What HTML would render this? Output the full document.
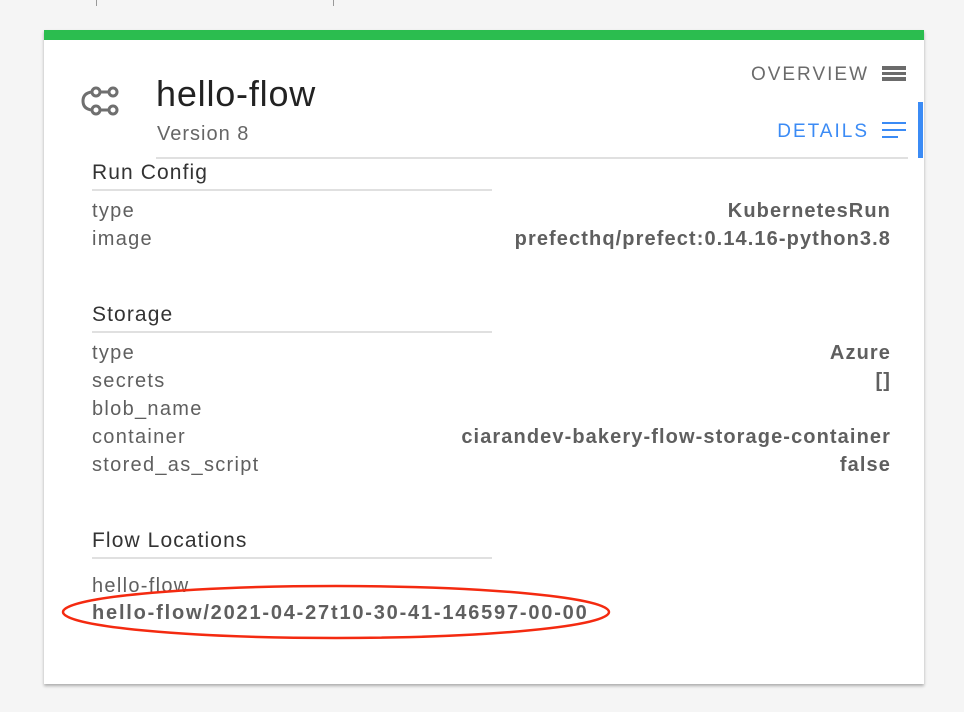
<!DOCTYPE html>
<html><head><style>
*{margin:0;padding:0;box-sizing:border-box}
body{width:964px;height:712px;background:#f5f5f5;position:relative;overflow:hidden;font-family:"Liberation Sans",Roboto,sans-serif}
.card{position:absolute;left:44px;top:30px;width:880px;height:654px;background:#fff;box-shadow:0 2px 3px rgba(0,0,0,.3)}
.green{position:absolute;left:44px;top:30px;width:880px;height:10px;background:#2bbd4f}
.t{position:absolute;white-space:nowrap}
.lbl{color:#5f5f5f;font-size:20px;left:92px;letter-spacing:1.3px}
.val{color:#5f5f5f;font-size:20px;font-weight:bold;right:73px;letter-spacing:1.1px}
.h{color:#333;font-size:21px;left:92px;letter-spacing:1.1px}
.line{position:absolute;height:2px;background:#e0e0e0}
</style></head><body>
<div style="position:absolute;left:96px;top:0;width:1px;height:6px;background:#999"></div>
<div style="position:absolute;left:333px;top:0;width:1px;height:6px;background:#999"></div>
<div class="card"></div>
<div class="green"></div>
<svg style="position:absolute;left:76px;top:80px" width="50" height="44" viewBox="76 80 50 44">
<g fill="none" stroke="#6f6f6f" stroke-width="3">
<circle cx="96" cy="92" r="4"/><circle cx="113" cy="92" r="4"/>
<circle cx="96" cy="110" r="4"/><circle cx="113" cy="110" r="4"/>
<path d="M100 92H109M100 110H109M92 92Q83 93 83 101Q83 109 92 110"/>
</g></svg>
<div class="t" style="left:156px;top:73px;font-size:36px;color:#222;letter-spacing:0.8px">hello-flow</div>
<div class="t" style="left:157px;top:123px;font-size:20px;color:#666;letter-spacing:1px">Version 8</div>
<div class="t" style="right:95px;top:64px;font-size:19px;color:#6b6b6b;letter-spacing:2px">OVERVIEW</div>
<div style="position:absolute;left:882px;top:66px;width:24px;height:4px;background:#6b6b6b"></div>
<div style="position:absolute;left:882px;top:72px;width:24px;height:3px;background:#6b6b6b"></div>
<div style="position:absolute;left:882px;top:77px;width:24px;height:4px;background:#6b6b6b"></div>
<div class="t" style="right:95px;top:121px;font-size:19px;color:#3b8bf5;letter-spacing:2px">DETAILS</div>
<div style="position:absolute;left:882px;top:122px;width:24px;height:2px;background:#3b8bf5"></div>
<div style="position:absolute;left:882px;top:129px;width:24px;height:2px;background:#3b8bf5"></div>
<div style="position:absolute;left:882px;top:136px;width:16px;height:2px;background:#3b8bf5"></div>
<div style="position:absolute;left:918px;top:102px;width:5px;height:56px;background:#3b8bf5"></div>
<div class="line" style="left:156px;top:157px;width:752px"></div>

<div class="t h" style="top:161px">Run Config</div>
<div class="line" style="left:92px;top:189px;width:400px"></div>
<div class="t lbl" style="top:200px">type</div><div class="t val" style="top:200px">KubernetesRun</div>
<div class="t lbl" style="top:228px">image</div><div class="t val" style="top:228px">prefecthq/prefect:0.14.16-python3.8</div>

<div class="t h" style="top:303px">Storage</div>
<div class="line" style="left:92px;top:331px;width:400px"></div>
<div class="t lbl" style="top:342px">type</div><div class="t val" style="top:342px">Azure</div>
<div class="t lbl" style="top:370px">secrets</div><div class="t val" style="top:370px">[]</div>
<div class="t lbl" style="top:398px">blob_name</div>
<div class="t lbl" style="top:426px">container</div><div class="t val" style="top:426px">ciarandev-bakery-flow-storage-container</div>
<div class="t lbl" style="top:454px">stored_as_script</div><div class="t val" style="top:454px">false</div>

<div class="t h" style="top:529px">Flow Locations</div>
<div class="line" style="left:92px;top:557px;width:400px"></div>
<div class="t lbl" style="top:575px">hello-flow</div>
<div class="t lbl" style="top:602px;font-weight:bold;letter-spacing:1.8px">hello-flow/2021-04-27t10-30-41-146597-00-00</div>
<svg style="position:absolute;left:0;top:0" width="964" height="712"><ellipse cx="336" cy="612" rx="273" ry="26" fill="none" stroke="#f42a10" stroke-width="2.5"/></svg>
</body></html>
